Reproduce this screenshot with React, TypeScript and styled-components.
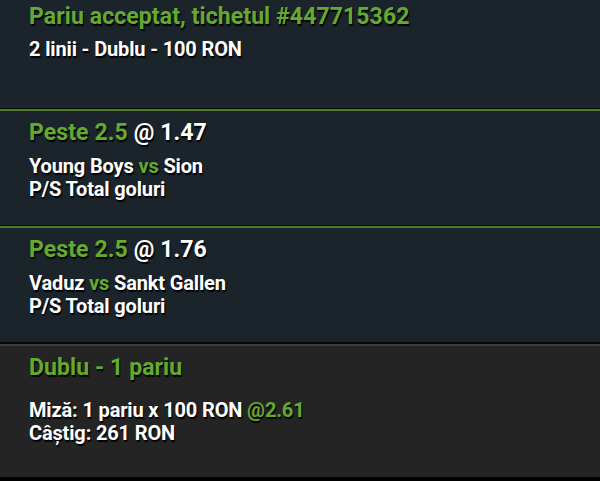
import React from "react";
import styled, { createGlobalStyle } from "styled-components";

const GlobalStyle = createGlobalStyle`
  html, body {
    margin: 0;
    padding: 0;
    background: #000;
  }
  body {
    font-family: Roboto, "Liberation Sans", sans-serif;
    -webkit-font-smoothing: antialiased;
  }
`;

const green = "#64aa30";

const Page = styled.div`
  width: 600px;
  display: flex;
  flex-direction: column;
`;

const Section = styled.section<{ $dark?: boolean; $height: number; $top: number }>`
  height: ${(p) => p.$height}px;
  box-sizing: border-box;
  padding: ${(p) => p.$top}px 29px 0;
  background: ${(p) => (p.$dark ? "#242424" : "#1b232b")};
  display: flex;
  flex-direction: column;
`;

const Divider = styled.div<{ $grey?: boolean }>`
  height: 2px;
  border-top: ${(p) => (p.$grey ? 2 : 1)}px solid #05080a;
  background: ${(p) => (p.$grey ? "#3b3b3b" : "#4b7d26")};
`;

const Title = styled.div`
  font-size: 23px;
  line-height: 26px;
  font-weight: 700;
  color: ${green};
  letter-spacing: 0.1px;
  text-shadow: 1px 1.5px 1px rgba(0, 0, 0, 0.95);
  white-space: nowrap;
`;

const Line = styled.div<{ $gap?: number }>`
  font-size: 20px;
  line-height: 23px;
  font-weight: 700;
  color: #fff;
  letter-spacing: -0.15px;
  text-shadow: 1px 1.5px 1px rgba(0, 0, 0, 0.95);
  margin-top: ${(p) => p.$gap ?? 0}px;
  white-space: nowrap;
`;

const Odds = styled.span`
  color: #fff;
`;

const Accent = styled.span`
  color: ${green};
`;

type Selection = {
  pick: string;
  odds: string;
  home: string;
  away: string;
  market: string;
};

const selections: Selection[] = [
  { pick: "Peste 2.5", odds: "1.47", home: "Young Boys", away: "Sion", market: "P/S Total goluri" },
  { pick: "Peste 2.5", odds: "1.76", home: "Vaduz", away: "Sankt Gallen", market: "P/S Total goluri" },
];

const App = () => {
  return (
    <Page>
      <GlobalStyle />
      <Section $height={108} $top={4}>
        <Title>Pariu acceptat, tichetul #447715362</Title>
        <Line $gap={8}>2 linii - Dublu - 100 RON</Line>
      </Section>
      {selections.map((s, i) => (
        <React.Fragment key={i}>
          <Divider />
          <Section $height={114} $top={9}>
            <Title>
              {s.pick} <Odds>@ {s.odds}</Odds>
            </Title>
            <Line $gap={9}>
              {s.home} <Accent>vs</Accent> {s.away}
            </Line>
            <Line>{s.market}</Line>
          </Section>
        </React.Fragment>
      ))}
      <Divider $grey />
      <Section $dark $height={131} $top={9}>
        <Title>Dublu - 1 pariu</Title>
        <Line $gap={18}>
          Miză: 1 pariu x 100 RON <Accent>@2.61</Accent>
        </Line>
        <Line>Câștig: 261 RON</Line>
      </Section>
    </Page>
  );
};

export default App;
